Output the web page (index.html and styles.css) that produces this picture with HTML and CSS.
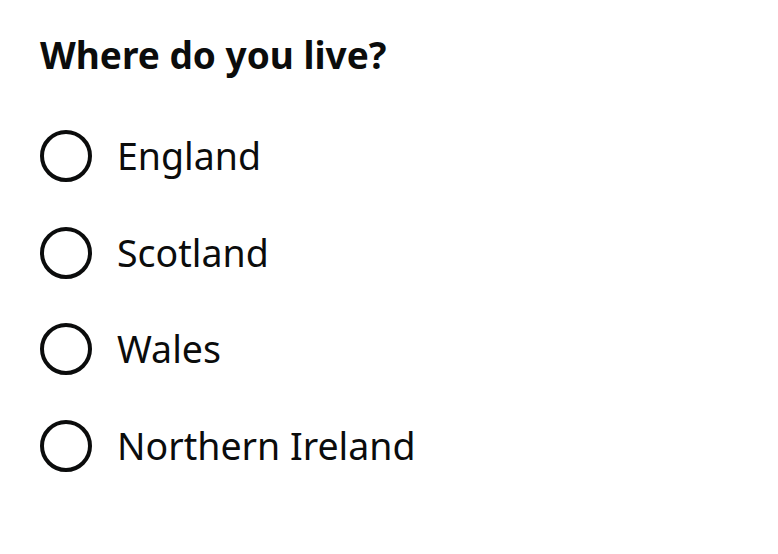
FILE: index.html
```html
<!DOCTYPE html>
<html lang="en">
<head>
<meta charset="utf-8">
<title>Where do you live?</title>
<link rel="stylesheet" href="styles.css">
</head>
<body>
<form class="form">
  <fieldset class="fieldset">
    <legend class="legend">Where do you live?</legend>
    <div class="radios">
      <div class="radio">
        <input class="radio__input" id="where-england" name="where" type="radio" value="england">
        <label class="radio__label" for="where-england">England</label>
      </div>
      <div class="radio">
        <input class="radio__input" id="where-scotland" name="where" type="radio" value="scotland">
        <label class="radio__label" for="where-scotland">Scotland</label>
      </div>
      <div class="radio">
        <input class="radio__input" id="where-wales" name="where" type="radio" value="wales">
        <label class="radio__label" for="where-wales">Wales</label>
      </div>
      <div class="radio">
        <input class="radio__input" id="where-ni" name="where" type="radio" value="northern-ireland">
        <label class="radio__label" for="where-ni">Northern Ireland</label>
      </div>
    </div>
  </fieldset>
</form>
</body>
</html>
```
FILE: styles.css
```css
html, body {
  margin: 0;
  padding: 0;
  background: #ffffff;
}

body {
  font-family: "Noto Sans", "Liberation Sans", sans-serif;
  color: #0b0c0c;
  -webkit-font-smoothing: antialiased;
}

.form {
  padding: 30px 40px;
}

.fieldset {
  margin: 0;
  padding: 0;
  border: 0;
  min-width: 0;
}

.legend {
  padding: 0;
  margin: 0 0 50px;
  font-weight: 700;
  font-size: 37px;
  line-height: 50px;
}

.radios {
  display: flex;
  flex-direction: column;
  gap: 44.67px;
}

.radio {
  display: flex;
  align-items: center;
  gap: 25px;
}

.radio__input {
  appearance: none;
  -webkit-appearance: none;
  margin: 0;
  flex: none;
  width: 52px;
  height: 52px;
  border: 4px solid currentColor;
  border-radius: 50%;
  background: transparent;
  box-sizing: border-box;
  color: #0b0c0c;
}

.radio__label {
  font-size: 37.5px;
  line-height: 52px;
  cursor: pointer;
}
```
